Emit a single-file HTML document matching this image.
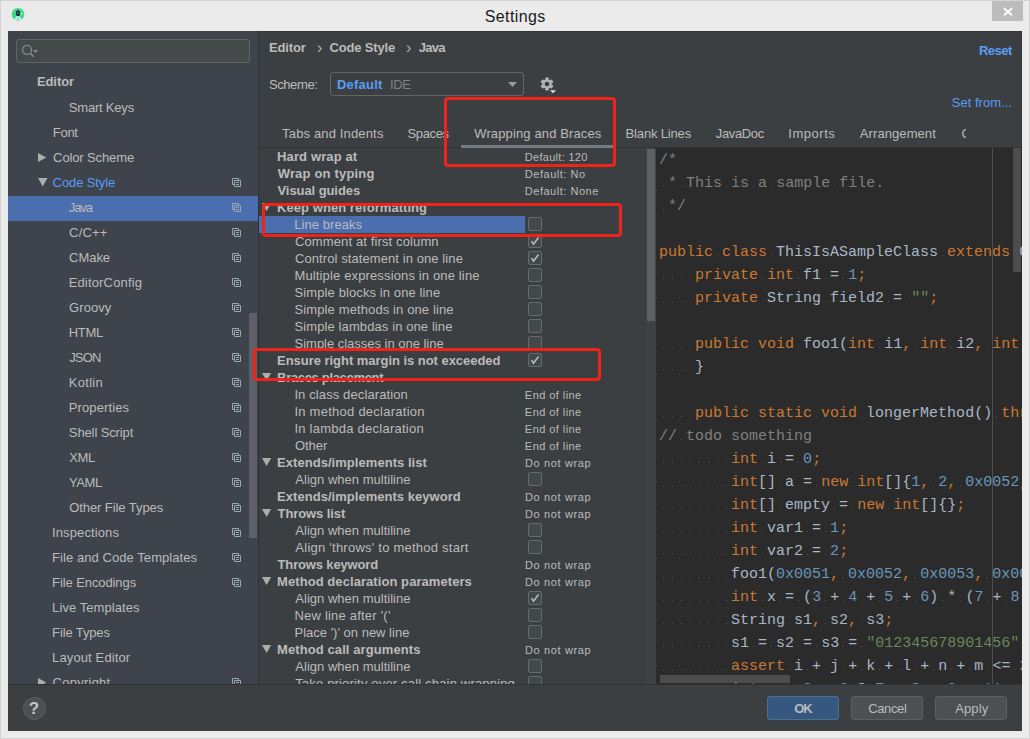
<!DOCTYPE html>
<html><head><meta charset="utf-8"><title>Settings</title>
<style>
*{box-sizing:border-box;margin:0;padding:0}
html,body{width:1030px;height:739px;overflow:hidden;background:#ebebeb}
body{position:relative;font-family:"Liberation Sans",sans-serif;font-size:13px;color:#bbbbbb}
.abs{position:absolute}
.t{position:absolute;white-space:nowrap}
#win{position:absolute;left:0;top:0;width:1030px;height:739px;background:#ebebeb;border:1px solid #d4d4d4}
#close{position:absolute;left:992px;top:1px;width:31px;height:20px;background:#bcbcbc}
#dark{position:absolute;left:8px;top:31px;width:1014px;height:700px;background:#3c3f41;overflow:hidden;border:1px solid #323537}
#side{position:absolute;left:8px;top:31px;width:250px;height:653px;background:#3e434c;overflow:hidden}
.si{position:absolute;left:8px;width:250px;height:25px}
.sel{background:#4b6eaf}
.lnk{color:#589df6}
.b{font-weight:bold}
.row{position:absolute;left:259px;width:388px;height:17px}
.cb{position:absolute;left:528px;width:14px;height:14px;border:1px solid #686b6d;background:#43494a;border-radius:2px}
.red{position:absolute;border:3px solid #f0231a;border-radius:4px}
#code{position:absolute;left:656px;top:148px;width:366px;height:536px;background:#2b2b2b;overflow:hidden;font-family:"Liberation Mono",monospace;font-size:15px;letter-spacing:0;color:#a9b7c6}
.cl{position:absolute;left:3px;height:23px;line-height:23px;white-space:pre}
.cl span{display:inline-block;height:23px;vertical-align:top}
.k{color:#cc7832}.n{color:#6897bb}.s{color:#6a8759}.c{color:#808080}
.d{background:linear-gradient(90deg,transparent 4px,#535353 4px,#535353 5px,transparent 5px) 0 14px/9px 1px repeat-x}
.btn{position:absolute;top:696px;width:72px;height:24px;border:1px solid #5e6060;background:#4c5052;border-radius:3px}
</style></head><body>
<div id="win"></div>
<div id="close"><svg class="abs" style="left:11px;top:6px" width="10" height="9" viewBox="0 0 10 9"><path d="M1 1.2L9 8.2M9 1.2L1 8.2" stroke="#fff" stroke-width="1.8" fill="none"/></svg></div>
<svg class="abs" style="left:11px;top:7px" width="15" height="16" viewBox="0 0 15 16"><circle cx="7" cy="7.3" r="6.3" fill="#3ddc84"/><path d="M6.7 8.6L3.1 14.4M7.3 8.6L10.9 14.4" stroke="#dcecf4" stroke-width="1.2" fill="none"/><path d="M4.6 11.4Q7 12.5 9.4 11.4" stroke="#dcecf4" stroke-width="1.2" fill="none"/><path d="M9.9 7.6L11.2 5.6" stroke="#c8efd9" stroke-width="1.1" fill="none"/><ellipse cx="7" cy="6.2" rx="2.1" ry="2.9" fill="#0d2b45"/><ellipse cx="7" cy="6.2" rx="0.9" ry="0.6" fill="#3ddc84"/></svg>
<div id="dark"></div>
<div id="side"></div>
<div class="abs" style="left:258px;top:31px;width:1px;height:653px;background:#323232"></div>
<div class="abs" style="left:16px;top:39px;width:234px;height:24px;background:#45494a;border:1px solid #646464;border-radius:3px"></div>
<svg class="abs" style="left:21px;top:44px" width="18" height="14" viewBox="0 0 18 14"><circle cx="6" cy="5.9" r="4.5" stroke="#7f8b91" stroke-width="1.3" fill="none"/><path d="M9.3 9.2L12.7 12.7" stroke="#7f8b91" stroke-width="1.6"/><path d="M11.9 6h5.1l-2.55 3z" fill="#7f8b91"/></svg>

<span class="t" style="left:484.64px;top:6.50px;line-height:20px;font-size:16px;letter-spacing:0.414px;color:#1a1a1a">Settings</span>
<div class="abs" style="left:0;top:0;width:1030px;height:684px;overflow:hidden">
<div class="si" style="top:71px"></div>
<span class="t b" style="left:36.89px;top:73.00px;line-height:17px;letter-spacing:-0.059px">Editor</span>
<div class="si" style="top:96px"></div>
<span class="t" style="left:68.85px;top:99.00px;line-height:17px;letter-spacing:-0.209px">Smart Keys</span>
<div class="si" style="top:121px"></div>
<span class="t" style="left:52.82px;top:124.00px;line-height:17px;letter-spacing:-0.287px">Font</span>
<div class="si" style="top:146px"><svg class="abs" style="left:29.8px;top:7px" width="9" height="9" viewBox="0 0 9 9"><path d="M0 0L8.3 4.5L0 9z" fill="#adadad"/></svg></div>
<span class="t" style="left:53.11px;top:149.00px;line-height:17px;letter-spacing:-0.120px">Color Scheme</span>
<div class="si" style="top:171px"><svg class="abs" style="left:29.8px;top:6.8px" width="10" height="9" viewBox="0 0 10 9"><path d="M0 0h9.5L4.75 8.4z" fill="#adadad"/></svg><svg class="abs" style="left:224px;top:7px" width="9" height="9" viewBox="0 0 9 9"><path d="M2.5 6.5H0.5V0.5H6.5V2.5M2.5 2.5h6v6h-6zM4 4.5h3M4 6.5h3" stroke="#9aa7b0" fill="none"/></svg></div>
<span class="t lnk" style="left:52.61px;top:174.00px;line-height:17px;letter-spacing:-0.102px">Code Style</span>
<div class="si sel" style="top:196px"><svg class="abs" style="left:224px;top:7px" width="9" height="9" viewBox="0 0 9 9"><path d="M2.5 6.5H0.5V0.5H6.5V2.5M2.5 2.5h6v6h-6zM4 4.5h3M4 6.5h3" stroke="#9aa7b0" fill="none"/></svg></div>
<span class="t" style="left:68.78px;top:199.00px;line-height:17px;letter-spacing:-1.072px">Java</span>
<div class="si" style="top:221px"><svg class="abs" style="left:224px;top:7px" width="9" height="9" viewBox="0 0 9 9"><path d="M2.5 6.5H0.5V0.5H6.5V2.5M2.5 2.5h6v6h-6zM4 4.5h3M4 6.5h3" stroke="#9aa7b0" fill="none"/></svg></div>
<span class="t" style="left:69.12px;top:224.00px;line-height:17px;letter-spacing:0.144px">C/C++</span>
<div class="si" style="top:246px"><svg class="abs" style="left:224px;top:7px" width="9" height="9" viewBox="0 0 9 9"><path d="M2.5 6.5H0.5V0.5H6.5V2.5M2.5 2.5h6v6h-6zM4 4.5h3M4 6.5h3" stroke="#9aa7b0" fill="none"/></svg></div>
<span class="t" style="left:69.12px;top:249.00px;line-height:17px;letter-spacing:-0.048px">CMake</span>
<div class="si" style="top:271px"><svg class="abs" style="left:224px;top:7px" width="9" height="9" viewBox="0 0 9 9"><path d="M2.5 6.5H0.5V0.5H6.5V2.5M2.5 2.5h6v6h-6zM4 4.5h3M4 6.5h3" stroke="#9aa7b0" fill="none"/></svg></div>
<span class="t" style="left:68.64px;top:274.00px;line-height:17px;letter-spacing:0.171px">EditorConfig</span>
<div class="si" style="top:296px"><svg class="abs" style="left:224px;top:7px" width="9" height="9" viewBox="0 0 9 9"><path d="M2.5 6.5H0.5V0.5H6.5V2.5M2.5 2.5h6v6h-6zM4 4.5h3M4 6.5h3" stroke="#9aa7b0" fill="none"/></svg></div>
<span class="t" style="left:69.12px;top:299.00px;line-height:17px;letter-spacing:0.048px">Groovy</span>
<div class="si" style="top:321px"><svg class="abs" style="left:224px;top:7px" width="9" height="9" viewBox="0 0 9 9"><path d="M2.5 6.5H0.5V0.5H6.5V2.5M2.5 2.5h6v6h-6zM4 4.5h3M4 6.5h3" stroke="#9aa7b0" fill="none"/></svg></div>
<span class="t" style="left:68.64px;top:324.00px;line-height:17px;letter-spacing:-0.268px">HTML</span>
<div class="si" style="top:346px"><svg class="abs" style="left:224px;top:7px" width="9" height="9" viewBox="0 0 9 9"><path d="M2.5 6.5H0.5V0.5H6.5V2.5M2.5 2.5h6v6h-6zM4 4.5h3M4 6.5h3" stroke="#9aa7b0" fill="none"/></svg></div>
<span class="t" style="left:69.16px;top:349.00px;line-height:17px;letter-spacing:-0.835px">JSON</span>
<div class="si" style="top:371px"><svg class="abs" style="left:224px;top:7px" width="9" height="9" viewBox="0 0 9 9"><path d="M2.5 6.5H0.5V0.5H6.5V2.5M2.5 2.5h6v6h-6zM4 4.5h3M4 6.5h3" stroke="#9aa7b0" fill="none"/></svg></div>
<span class="t" style="left:68.68px;top:374.00px;line-height:17px;letter-spacing:0.320px">Kotlin</span>
<div class="si" style="top:396px"><svg class="abs" style="left:224px;top:7px" width="9" height="9" viewBox="0 0 9 9"><path d="M2.5 6.5H0.5V0.5H6.5V2.5M2.5 2.5h6v6h-6zM4 4.5h3M4 6.5h3" stroke="#9aa7b0" fill="none"/></svg></div>
<span class="t" style="left:68.64px;top:399.00px;line-height:17px;letter-spacing:0.136px">Properties</span>
<div class="si" style="top:421px"><svg class="abs" style="left:224px;top:7px" width="9" height="9" viewBox="0 0 9 9"><path d="M2.5 6.5H0.5V0.5H6.5V2.5M2.5 2.5h6v6h-6zM4 4.5h3M4 6.5h3" stroke="#9aa7b0" fill="none"/></svg></div>
<span class="t" style="left:68.83px;top:424.00px;line-height:17px;letter-spacing:-0.115px">Shell Script</span>
<div class="si" style="top:446px"><svg class="abs" style="left:224px;top:7px" width="9" height="9" viewBox="0 0 9 9"><path d="M2.5 6.5H0.5V0.5H6.5V2.5M2.5 2.5h6v6h-6zM4 4.5h3M4 6.5h3" stroke="#9aa7b0" fill="none"/></svg></div>
<span class="t" style="left:69.13px;top:449.00px;line-height:17px;letter-spacing:-0.263px">XML</span>
<div class="si" style="top:471px"><svg class="abs" style="left:224px;top:7px" width="9" height="9" viewBox="0 0 9 9"><path d="M2.5 6.5H0.5V0.5H6.5V2.5M2.5 2.5h6v6h-6zM4 4.5h3M4 6.5h3" stroke="#9aa7b0" fill="none"/></svg></div>
<span class="t" style="left:69.03px;top:474.00px;line-height:17px;letter-spacing:-0.401px">YAML</span>
<div class="si" style="top:496px"><svg class="abs" style="left:224px;top:7px" width="9" height="9" viewBox="0 0 9 9"><path d="M2.5 6.5H0.5V0.5H6.5V2.5M2.5 2.5h6v6h-6zM4 4.5h3M4 6.5h3" stroke="#9aa7b0" fill="none"/></svg></div>
<span class="t" style="left:69.14px;top:499.00px;line-height:17px;letter-spacing:-0.066px">Other File Types</span>
<div class="si" style="top:521px"><svg class="abs" style="left:224px;top:7px" width="9" height="9" viewBox="0 0 9 9"><path d="M2.5 6.5H0.5V0.5H6.5V2.5M2.5 2.5h6v6h-6zM4 4.5h3M4 6.5h3" stroke="#9aa7b0" fill="none"/></svg></div>
<span class="t" style="left:52.06px;top:524.00px;line-height:17px;letter-spacing:0.116px">Inspections</span>
<div class="si" style="top:546px"><svg class="abs" style="left:224px;top:7px" width="9" height="9" viewBox="0 0 9 9"><path d="M2.5 6.5H0.5V0.5H6.5V2.5M2.5 2.5h6v6h-6zM4 4.5h3M4 6.5h3" stroke="#9aa7b0" fill="none"/></svg></div>
<span class="t" style="left:52.11px;top:549.00px;line-height:17px;letter-spacing:0.061px">File and Code Templates</span>
<div class="si" style="top:571px"><svg class="abs" style="left:224px;top:7px" width="9" height="9" viewBox="0 0 9 9"><path d="M2.5 6.5H0.5V0.5H6.5V2.5M2.5 2.5h6v6h-6zM4 4.5h3M4 6.5h3" stroke="#9aa7b0" fill="none"/></svg></div>
<span class="t" style="left:52.11px;top:574.00px;line-height:17px;letter-spacing:-0.096px">File Encodings</span>
<div class="si" style="top:596px"></div>
<span class="t" style="left:52.11px;top:599.00px;line-height:17px;letter-spacing:0.076px">Live Templates</span>
<div class="si" style="top:621px"></div>
<span class="t" style="left:52.11px;top:624.00px;line-height:17px;letter-spacing:-0.128px">File Types</span>
<div class="si" style="top:646px"></div>
<span class="t" style="left:52.11px;top:649.00px;line-height:17px;letter-spacing:0.119px">Layout Editor</span>
<div class="si" style="top:671px"><svg class="abs" style="left:29.8px;top:7px" width="9" height="9" viewBox="0 0 9 9"><path d="M0 0L8.3 4.5L0 9z" fill="#adadad"/></svg><svg class="abs" style="left:224px;top:7px" width="9" height="9" viewBox="0 0 9 9"><path d="M2.5 6.5H0.5V0.5H6.5V2.5M2.5 2.5h6v6h-6zM4 4.5h3M4 6.5h3" stroke="#9aa7b0" fill="none"/></svg></div>
<span class="t" style="left:52.59px;top:674.00px;line-height:17px;letter-spacing:0.247px">Copyright</span>
<div class="abs" style="left:249px;top:313px;width:8px;height:225px;background:#5d606a"></div>
<span class="t b" style="left:277.09px;top:148.00px;line-height:17px;letter-spacing:0.119px">Hard wrap at</span>
<span class="t" style="left:524.77px;top:149.50px;line-height:15px;font-size:11px;letter-spacing:0.295px">Default: 120</span>
<span class="t b" style="left:277.67px;top:165.00px;line-height:17px;letter-spacing:0.186px">Wrap on typing</span>
<span class="t" style="left:524.78px;top:166.50px;line-height:15px;font-size:11px;letter-spacing:0.537px">Default: No</span>
<span class="t b" style="left:277.53px;top:182.00px;line-height:17px;letter-spacing:-0.080px">Visual guides</span>
<span class="t" style="left:524.81px;top:183.50px;line-height:15px;font-size:11px;letter-spacing:0.522px">Default: None</span>
<svg class="abs" style="left:261.9px;top:203px" width="10" height="8" viewBox="0 0 10 8"><path d="M0 0h9.2L4.6 8z" fill="#adadad"/></svg>
<span class="t b" style="left:277.09px;top:199.00px;line-height:17px;letter-spacing:0.056px">Keep when reformatting</span>
<div class="abs" style="left:259px;top:216px;width:266px;height:17px;background:#4b6eaf"></div>
<span class="t" style="left:294.21px;top:216.00px;line-height:17px;letter-spacing:0.069px">Line breaks</span>
<div class="cb" style="top:217px"></div>
<span class="t" style="left:294.94px;top:233.00px;line-height:17px;letter-spacing:0.126px">Comment at first column</span>
<div class="cb" style="top:234px"><svg class="abs" style="left:0;top:0" width="12" height="12" viewBox="0 0 12 12"><path d="M2.5 6.1L4.5 9.1L9.6 2.4" stroke="#b8b8b8" stroke-width="1.6" fill="none"/></svg></div>
<span class="t" style="left:294.94px;top:250.00px;line-height:17px;letter-spacing:0.087px">Control statement in one line</span>
<div class="cb" style="top:251px"><svg class="abs" style="left:0;top:0" width="12" height="12" viewBox="0 0 12 12"><path d="M2.5 6.1L4.5 9.1L9.6 2.4" stroke="#b8b8b8" stroke-width="1.6" fill="none"/></svg></div>
<span class="t" style="left:294.48px;top:267.00px;line-height:17px;letter-spacing:0.141px">Multiple expressions in one line</span>
<div class="cb" style="top:268px"></div>
<span class="t" style="left:294.56px;top:284.00px;line-height:17px;letter-spacing:0.105px">Simple blocks in one line</span>
<div class="cb" style="top:285px"></div>
<span class="t" style="left:294.56px;top:301.00px;line-height:17px;letter-spacing:0.113px">Simple methods in one line</span>
<div class="cb" style="top:302px"></div>
<span class="t" style="left:294.56px;top:318.00px;line-height:17px;letter-spacing:0.100px">Simple lambdas in one line</span>
<div class="cb" style="top:319px"></div>
<span class="t" style="left:294.56px;top:335.00px;line-height:17px;letter-spacing:-0.018px">Simple classes in one line</span>
<div class="cb" style="top:336px"></div>
<span class="t b" style="left:277.09px;top:352.00px;line-height:17px;letter-spacing:-0.037px">Ensure right margin is not exceeded</span>
<div class="cb" style="top:353px"><svg class="abs" style="left:0;top:0" width="12" height="12" viewBox="0 0 12 12"><path d="M2.5 6.1L4.5 9.1L9.6 2.4" stroke="#b8b8b8" stroke-width="1.6" fill="none"/></svg></div>
<svg class="abs" style="left:261.9px;top:373px" width="10" height="8" viewBox="0 0 10 8"><path d="M0 0h9.2L4.6 8z" fill="#adadad"/></svg>
<span class="t b" style="left:277.09px;top:369.00px;line-height:17px;letter-spacing:-0.322px">Braces placement</span>
<span class="t" style="left:294.40px;top:386.00px;line-height:17px;letter-spacing:0.114px">In class declaration</span>
<span class="t" style="left:524.87px;top:387.50px;line-height:15px;font-size:11px;letter-spacing:0.439px">End of line</span>
<span class="t" style="left:294.40px;top:403.00px;line-height:17px;letter-spacing:0.256px">In method declaration</span>
<span class="t" style="left:524.87px;top:404.50px;line-height:15px;font-size:11px;letter-spacing:0.439px">End of line</span>
<span class="t" style="left:294.40px;top:420.00px;line-height:17px;letter-spacing:0.247px">In lambda declaration</span>
<span class="t" style="left:524.87px;top:421.50px;line-height:15px;font-size:11px;letter-spacing:0.439px">End of line</span>
<span class="t" style="left:294.90px;top:437.00px;line-height:17px;letter-spacing:-0.013px">Other</span>
<span class="t" style="left:524.87px;top:438.50px;line-height:15px;font-size:11px;letter-spacing:0.439px">End of line</span>
<svg class="abs" style="left:261.9px;top:458px" width="10" height="8" viewBox="0 0 10 8"><path d="M0 0h9.2L4.6 8z" fill="#adadad"/></svg>
<span class="t b" style="left:277.09px;top:454.00px;line-height:17px;letter-spacing:0.043px">Extends/implements list</span>
<span class="t" style="left:524.90px;top:455.50px;line-height:15px;font-size:11px;letter-spacing:0.648px">Do not wrap</span>
<span class="t" style="left:295.36px;top:471.00px;line-height:17px;letter-spacing:0.012px">Align when multiline</span>
<div class="cb" style="top:472px"></div>
<span class="t b" style="left:277.09px;top:488.00px;line-height:17px;letter-spacing:0.035px">Extends/implements keyword</span>
<span class="t" style="left:524.90px;top:489.50px;line-height:15px;font-size:11px;letter-spacing:0.648px">Do not wrap</span>
<svg class="abs" style="left:261.9px;top:509px" width="10" height="8" viewBox="0 0 10 8"><path d="M0 0h9.2L4.6 8z" fill="#adadad"/></svg>
<span class="t b" style="left:277.58px;top:505.00px;line-height:17px;letter-spacing:-0.096px">Throws list</span>
<span class="t" style="left:524.90px;top:506.50px;line-height:15px;font-size:11px;letter-spacing:0.648px">Do not wrap</span>
<span class="t" style="left:295.36px;top:522.00px;line-height:17px;letter-spacing:0.012px">Align when multiline</span>
<div class="cb" style="top:523px"></div>
<span class="t" style="left:295.36px;top:539.00px;line-height:17px;letter-spacing:0.238px">Align 'throws' to method start</span>
<div class="cb" style="top:540px"></div>
<span class="t b" style="left:277.58px;top:556.00px;line-height:17px;letter-spacing:-0.158px">Throws keyword</span>
<span class="t" style="left:524.90px;top:557.50px;line-height:15px;font-size:11px;letter-spacing:0.648px">Do not wrap</span>
<svg class="abs" style="left:261.9px;top:577px" width="10" height="8" viewBox="0 0 10 8"><path d="M0 0h9.2L4.6 8z" fill="#adadad"/></svg>
<span class="t b" style="left:277.09px;top:573.00px;line-height:17px;letter-spacing:0.066px">Method declaration parameters</span>
<span class="t" style="left:524.90px;top:574.50px;line-height:15px;font-size:11px;letter-spacing:0.648px">Do not wrap</span>
<span class="t" style="left:295.36px;top:590.00px;line-height:17px;letter-spacing:0.012px">Align when multiline</span>
<div class="cb" style="top:591px"><svg class="abs" style="left:0;top:0" width="12" height="12" viewBox="0 0 12 12"><path d="M2.5 6.1L4.5 9.1L9.6 2.4" stroke="#b8b8b8" stroke-width="1.6" fill="none"/></svg></div>
<span class="t" style="left:294.48px;top:607.00px;line-height:17px;letter-spacing:0.207px">New line after '('</span>
<div class="cb" style="top:608px"></div>
<span class="t" style="left:294.48px;top:624.00px;line-height:17px;letter-spacing:0.005px">Place ')' on new line</span>
<div class="cb" style="top:625px"></div>
<svg class="abs" style="left:261.9px;top:645px" width="10" height="8" viewBox="0 0 10 8"><path d="M0 0h9.2L4.6 8z" fill="#adadad"/></svg>
<span class="t b" style="left:277.09px;top:641.00px;line-height:17px;letter-spacing:0.087px">Method call arguments</span>
<span class="t" style="left:524.90px;top:642.50px;line-height:15px;font-size:11px;letter-spacing:0.648px">Do not wrap</span>
<span class="t" style="left:295.36px;top:658.00px;line-height:17px;letter-spacing:0.012px">Align when multiline</span>
<div class="cb" style="top:659px"></div>
<span class="t" style="left:295.19px;top:675.00px;line-height:17px;letter-spacing:0.176px">Take priority over call chain wrapping</span>
<div class="cb" style="top:676px"></div>
</div>
<div class="abs" style="left:646px;top:148px;width:10px;height:536px;background:#3f4244"></div>
<div class="abs" style="left:647px;top:149px;width:8px;height:172px;background:#5d6162"></div>
<span class="t b" style="left:268.96px;top:38.80px;line-height:17px;letter-spacing:-0.141px">Editor</span>
<span class="t" style="left:316.96px;top:37.50px;line-height:20px;font-size:16px;color:#b0b0b0">›</span>
<span class="t b" style="left:329.50px;top:38.80px;line-height:17px;letter-spacing:-0.164px">Code Style</span>
<span class="t" style="left:406.06px;top:37.50px;line-height:20px;font-size:16px;color:#b0b0b0">›</span>
<span class="t b" style="left:418.63px;top:38.80px;line-height:17px;letter-spacing:-0.692px">Java</span>
<span class="t b lnk" style="left:978.92px;top:42.00px;line-height:17px;letter-spacing:-0.517px">Reset</span>
<span class="t" style="left:268.89px;top:75.80px;line-height:17px;letter-spacing:-0.389px">Scheme:</span>
<div class="abs" style="left:330px;top:72px;width:194px;height:24px;border:1px solid #646464;border-radius:3px;background:#3c3f41"></div>
<span class="t b lnk" style="left:336.97px;top:75.80px;line-height:17px;letter-spacing:0.227px">Default</span>
<span class="t" style="left:390.00px;top:75.80px;line-height:17px;letter-spacing:-0.342px;color:#808080">IDE</span>
<svg class="abs" style="left:508px;top:82px" width="9" height="5" viewBox="0 0 9 5"><path d="M0 0h9L4.5 5z" fill="#9a9da0"/></svg>
<svg class="abs" style="left:539px;top:76px" width="19" height="19" viewBox="0 0 19 19"><g transform="translate(8 8)" fill="#afb1b3"><rect x="-1.8" y="-6.5" width="3.6" height="4" rx="0.8" transform="rotate(0)"/><rect x="-1.8" y="-6.5" width="3.6" height="4" rx="0.8" transform="rotate(60)"/><rect x="-1.8" y="-6.5" width="3.6" height="4" rx="0.8" transform="rotate(120)"/><rect x="-1.8" y="-6.5" width="3.6" height="4" rx="0.8" transform="rotate(180)"/><rect x="-1.8" y="-6.5" width="3.6" height="4" rx="0.8" transform="rotate(240)"/><rect x="-1.8" y="-6.5" width="3.6" height="4" rx="0.8" transform="rotate(300)"/><circle r="4.6"/></g><circle cx="8" cy="8" r="2.3" fill="#3c3f41"/><path d="M11 14.2h6l-3 3z" fill="#e0e0e0"/></svg>
<span class="t lnk" style="left:951.84px;top:93.80px;line-height:17px;letter-spacing:0.011px">Set from...</span>
<span class="t" style="left:282.11px;top:125.20px;line-height:17px;letter-spacing:0.150px">Tabs and Indents</span>
<span class="t" style="left:407.56px;top:125.20px;line-height:17px;letter-spacing:-0.373px">Spaces</span>
<span class="t" style="left:474.23px;top:125.20px;line-height:17px;letter-spacing:0.131px">Wrapping and Braces</span>
<span class="t" style="left:625.61px;top:125.20px;line-height:17px;letter-spacing:-0.164px">Blank Lines</span>
<span class="t" style="left:715.83px;top:125.20px;line-height:17px;letter-spacing:-0.367px">JavaDoc</span>
<span class="t" style="left:788.25px;top:125.20px;line-height:17px;letter-spacing:0.543px">Imports</span>
<span class="t" style="left:859.87px;top:125.20px;line-height:17px;letter-spacing:0.075px">Arrangement</span>
<div class="abs" style="left:961px;top:120px;width:5px;height:24px;overflow:hidden"><span class="t" style="left:0.6px;top:5.2px;line-height:17px">Code Generation</span></div>
<div class="abs" style="left:259px;top:147px;width:763px;height:1px;background:#323232"></div>
<div class="abs" style="left:461px;top:145px;width:152px;height:3px;background:#747a80"></div>
<div id="code">
<div class="abs" style="left:357px;top:0;width:8px;height:124px;background:#4d4d4d"></div>
<div class="abs" style="left:4px;top:527px;width:130px;height:8px;background:#4d4d4d"></div>
<div class="cl" style="top:1px"><span class="c">/*</span></div>
<div class="cl" style="top:24px"><span class="d"> </span><span class="c">*</span><span class="d"> </span><span class="c">This</span><span class="d"> </span><span class="c">is</span><span class="d"> </span><span class="c">a</span><span class="d"> </span><span class="c">sample</span><span class="d"> </span><span class="c">file.</span></div>
<div class="cl" style="top:47px"><span class="d"> </span><span class="c">*/</span></div>
<div class="cl" style="top:93px"><span class="k">public</span><span class="d"> </span><span class="k">class</span><span class="d"> </span><span>ThisIsASampleClass</span><span class="d"> </span><span class="k">extends</span><span class="d"> </span><span>C1</span><span class="d"> </span><span class="k">implements</span><span class="d"> </span><span>I1</span><span class="k">,</span><span class="d"> </span><span>I2</span><span class="k">,</span><span class="d"> </span><span>I3</span><span class="k">,</span><span class="d"> </span><span>I4</span><span class="k">,</span><span class="d"> </span><span>I5</span><span class="d"> </span><span>{</span></div>
<div class="cl" style="top:116px"><span class="d">    </span><span class="k">private</span><span class="d"> </span><span class="k">int</span><span class="d"> </span><span>f1</span><span class="d"> </span><span>=</span><span class="d"> </span><span class="n">1</span><span class="k">;</span></div>
<div class="cl" style="top:139px"><span class="d">    </span><span class="k">private</span><span class="d"> </span><span>String</span><span class="d"> </span><span>field2</span><span class="d"> </span><span>=</span><span class="d"> </span><span class="s">""</span><span class="k">;</span></div>
<div class="cl" style="top:185px"><span class="d">    </span><span class="k">public</span><span class="d"> </span><span class="k">void</span><span class="d"> </span><span>foo1(</span><span class="k">int</span><span class="d"> </span><span>i1</span><span class="k">,</span><span class="d"> </span><span class="k">int</span><span class="d"> </span><span>i2</span><span class="k">,</span><span class="d"> </span><span class="k">int</span><span class="d"> </span><span>i3</span><span class="k">,</span><span class="d"> </span><span class="k">int</span><span class="d"> </span><span>i4</span><span class="k">,</span><span class="d"> </span><span class="k">int</span><span class="d"> </span><span>i5</span><span class="k">,</span><span class="d"> </span><span class="k">int</span><span class="d"> </span><span>i6</span><span class="k">,</span><span class="d"> </span><span class="k">int</span><span class="d"> </span><span>i7)</span><span class="d"> </span><span>{</span></div>
<div class="cl" style="top:208px"><span class="d">    </span><span>}</span></div>
<div class="cl" style="top:254px"><span class="d">    </span><span class="k">public</span><span class="d"> </span><span class="k">static</span><span class="d"> </span><span class="k">void</span><span class="d"> </span><span>longerMethod()</span><span class="d"> </span><span class="k">throws</span><span class="d"> </span><span>Exception1</span><span class="k">,</span><span class="d"> </span><span>Exception2</span><span class="k">,</span><span class="d"> </span><span>Exception3</span><span class="d"> </span><span>{</span></div>
<div class="cl" style="top:277px"><span class="c">//</span><span class="d"> </span><span class="c">todo</span><span class="d"> </span><span class="c">something</span></div>
<div class="cl" style="top:300px"><span class="d">        </span><span class="k">int</span><span class="d"> </span><span>i</span><span class="d"> </span><span>=</span><span class="d"> </span><span class="n">0</span><span class="k">;</span></div>
<div class="cl" style="top:323px"><span class="d">        </span><span class="k">int</span><span>[]</span><span class="d"> </span><span>a</span><span class="d"> </span><span>=</span><span class="d"> </span><span class="k">new</span><span class="d"> </span><span class="k">int</span><span>[]{</span><span class="n">1</span><span class="k">,</span><span class="d"> </span><span class="n">2</span><span class="k">,</span><span class="d"> </span><span class="n">0x0052</span><span class="k">,</span><span class="d"> </span><span class="n">0x0053</span><span class="k">,</span><span class="d"> </span><span class="n">0x0054</span><span>}</span><span class="k">;</span></div>
<div class="cl" style="top:346px"><span class="d">        </span><span class="k">int</span><span>[]</span><span class="d"> </span><span>empty</span><span class="d"> </span><span>=</span><span class="d"> </span><span class="k">new</span><span class="d"> </span><span class="k">int</span><span>[]{}</span><span class="k">;</span></div>
<div class="cl" style="top:369px"><span class="d">        </span><span class="k">int</span><span class="d"> </span><span>var1</span><span class="d"> </span><span>=</span><span class="d"> </span><span class="n">1</span><span class="k">;</span></div>
<div class="cl" style="top:392px"><span class="d">        </span><span class="k">int</span><span class="d"> </span><span>var2</span><span class="d"> </span><span>=</span><span class="d"> </span><span class="n">2</span><span class="k">;</span></div>
<div class="cl" style="top:415px"><span class="d">        </span><span>foo1(</span><span class="n">0x0051</span><span class="k">,</span><span class="d"> </span><span class="n">0x0052</span><span class="k">,</span><span class="d"> </span><span class="n">0x0053</span><span class="k">,</span><span class="d"> </span><span class="n">0x0054</span><span class="k">,</span><span class="d"> </span><span class="n">0x0055</span><span class="k">,</span><span class="d"> </span><span class="n">0x0056</span><span class="k">,</span><span class="d"> </span><span class="n">0x0057</span><span>)</span><span class="k">;</span></div>
<div class="cl" style="top:438px"><span class="d">        </span><span class="k">int</span><span class="d"> </span><span>x</span><span class="d"> </span><span>=</span><span class="d"> </span><span>(</span><span class="n">3</span><span class="d"> </span><span>+</span><span class="d"> </span><span class="n">4</span><span class="d"> </span><span>+</span><span class="d"> </span><span class="n">5</span><span class="d"> </span><span>+</span><span class="d"> </span><span class="n">6</span><span>)</span><span class="d"> </span><span>*</span><span class="d"> </span><span>(</span><span class="n">7</span><span class="d"> </span><span>+</span><span class="d"> </span><span class="n">8</span><span class="d"> </span><span>+</span><span class="d"> </span><span class="n">9</span><span class="d"> </span><span>+</span><span class="d"> </span><span class="n">10</span><span>)</span><span class="d"> </span><span>*</span><span class="d"> </span><span>(</span><span class="n">11</span><span class="d"> </span><span>+</span><span class="d"> </span><span class="n">12</span><span class="d"> </span><span>+</span><span class="d"> </span><span class="n">13</span><span class="d"> </span><span>+</span><span class="d"> </span><span class="n">14</span><span class="d"> </span><span>+</span><span class="d"> </span><span class="n">0xFFFFFFFF</span><span>)</span><span class="k">;</span></div>
<div class="cl" style="top:461px"><span class="d">        </span><span>String</span><span class="d"> </span><span>s1</span><span class="k">,</span><span class="d"> </span><span>s2</span><span class="k">,</span><span class="d"> </span><span>s3</span><span class="k">;</span></div>
<div class="cl" style="top:484px"><span class="d">        </span><span>s1</span><span class="d"> </span><span>=</span><span class="d"> </span><span>s2</span><span class="d"> </span><span>=</span><span class="d"> </span><span>s3</span><span class="d"> </span><span>=</span><span class="d"> </span><span class="s">"012345678901456"</span><span class="k">;</span></div>
<div class="cl" style="top:507px"><span class="d">        </span><span class="k">assert</span><span class="d"> </span><span>i</span><span class="d"> </span><span>+</span><span class="d"> </span><span>j</span><span class="d"> </span><span>+</span><span class="d"> </span><span>k</span><span class="d"> </span><span>+</span><span class="d"> </span><span>l</span><span class="d"> </span><span>+</span><span class="d"> </span><span>n</span><span class="d"> </span><span>+</span><span class="d"> </span><span>m</span><span class="d"> </span><span>&lt;=</span><span class="d"> </span><span class="n">2</span><span class="d"> </span><span>:</span><span class="d"> </span><span class="s">"assert</span><span class="d"> </span><span class="s">description"</span><span class="k">;</span></div>
<div class="cl" style="top:530px"><span class="d">        </span><span class="k">int</span><span class="d"> </span><span>y</span><span class="d"> </span><span>=</span><span class="d"> </span><span class="n">2</span><span class="d"> </span><span>&gt;</span><span class="d"> </span><span class="n">3</span><span class="d"> </span><span>?</span><span class="d"> </span><span class="n">7</span><span class="d"> </span><span>+</span><span class="d"> </span><span class="n">8</span><span class="d"> </span><span>+</span><span class="d"> </span><span class="n">9</span><span class="d"> </span><span>:</span><span class="d"> </span><span class="n">11</span><span class="d"> </span><span>+</span><span class="d"> </span><span class="n">12</span><span class="d"> </span><span>+</span><span class="d"> </span><span class="n">13</span><span class="k">;</span></div>
<div class="abs" style="left:336px;top:0;width:1px;height:536px;background:#4f4f4f"></div>
</div>
<div class="abs" style="left:8px;top:684px;width:1014px;height:47px;background:#3c3f41;border-top:1px solid #323232"></div>
<div class="abs" style="left:23px;top:697px;width:23px;height:23px;border-radius:12px;background:#4c5052;border:1px solid #5e6060"></div>
<div class="btn" style="left:767px;background:#365880;border-color:#4c708c"></div>
<div class="btn" style="left:851px"></div>
<div class="btn" style="left:935px"></div>

<span class="t b" style="left:28.82px;top:698.20px;line-height:21px;font-size:17px;color:#c4c4c4">?</span>
<span class="t b" style="left:794.26px;top:700.20px;line-height:17px;letter-spacing:-1.155px">OK</span>
<span class="t" style="left:868.15px;top:700.20px;line-height:17px;letter-spacing:-0.342px">Cancel</span>
<span class="t" style="left:955.16px;top:700.20px;line-height:17px;letter-spacing:0.129px">Apply</span>
<div class="red" style="left:444px;top:97px;width:172px;height:70px"></div>
<div class="red" style="left:262px;top:203px;width:360px;height:34px"></div>
<div class="red" style="left:253px;top:348px;width:348px;height:33px"></div>
</body></html>
